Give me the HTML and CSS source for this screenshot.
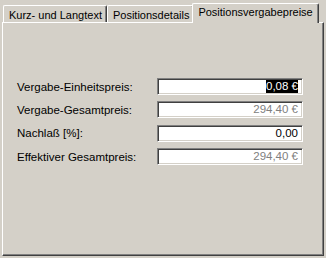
FILE: index.html
```html
<!DOCTYPE html>
<html>
<head>
<meta charset="utf-8">
<link rel="stylesheet" href="styles.css">
</head>
<body>
<div class="window">
  <div class="tabs">
    <div class="tab">Kurz- und Langtext</div>
    <div class="tab">Positionsdetails</div>
    <div class="tab active">Positionsvergabepreise</div>
  </div>
  <div class="panel">
    <div class="form">
      <div class="label">Vergabe-Einheitspreis:</div>
      <div class="field"><span class="sel">0,08 €</span></div>
      <div class="label">Vergabe-Gesamtpreis:</div>
      <div class="field readonly">294,40 €</div>
      <div class="label">Nachlaß [%]:</div>
      <div class="field">0,00</div>
      <div class="label">Effektiver Gesamtpreis:</div>
      <div class="field readonly">294,40 €</div>
    </div>
  </div>
</div>
</body>
</html>
```

FILE: styles.css
```css
html, body {
  margin: 0;
  padding: 0;
  background: #d4d0c8;
  font-family: "Liberation Sans", Arial, sans-serif;
  font-size: 11px;
  color: #000;
}

.window {
  width: 326px;
  height: 258px;
  padding: 3px 0 0 2px;
  box-sizing: border-box;
}

.tabs {
  display: flex;
  align-items: flex-end;
  height: 19px;
  padding-left: 1px;
  position: relative;
  z-index: 2;
}

.tab {
  height: 17px;
  box-sizing: border-box;
  padding: 3px 4px 0 5px;
  border-top: 1px solid #fff;
  border-left: 1px solid #fff;
  border-right: 1px solid #404040;
  border-top-left-radius: 2px;
  border-top-right-radius: 2px;
  box-shadow: inset -1px 0 0 #808080;
  background: #d4d0c8;
  white-space: nowrap;
  line-height: 12px;
}

.tab.active {
  height: 20px;
  margin-left: -2px;
  margin-bottom: -1px;
  padding: 2px 5px 0 5px;
  position: relative;
}

.panel {
  width: 322px;
  height: 234px;
  box-sizing: border-box;
  border-top: 1px solid #fff;
  border-left: 1px solid #fff;
  border-right: 1px solid #404040;
  border-bottom: 1px solid #404040;
  box-shadow: inset -1px -1px 0 #808080;
  padding: 55px 0 0 14px;
  position: relative;
  z-index: 1;
}

.form {
  display: grid;
  grid-template-columns: 140px 146px;
  grid-auto-rows: 17px;
  row-gap: 6.4px;
  align-items: center;
  font-family: "Liberation Sans Narrow", "Arial Narrow", sans-serif;
  font-size: 11.5px;
}

.label {
  line-height: 14px;
}

.field {
  height: 17px;
  box-sizing: border-box;
  background: #fff;
  border-top: 1px solid #808080;
  border-left: 1px solid #808080;
  border-right: 1px solid #fff;
  border-bottom: 1px solid #fff;
  box-shadow: inset 1px 1px 0 #404040, inset -1px -1px 0 #d4d0c8;
  text-align: right;
  padding: 1px 4px 0 2px;
  line-height: 13px;
  white-space: nowrap;
}

.field.readonly {
  color: #808080;
}

.sel {
  background: #000;
  color: #fff;
  display: inline-block;
  line-height: 13px;
}
```
